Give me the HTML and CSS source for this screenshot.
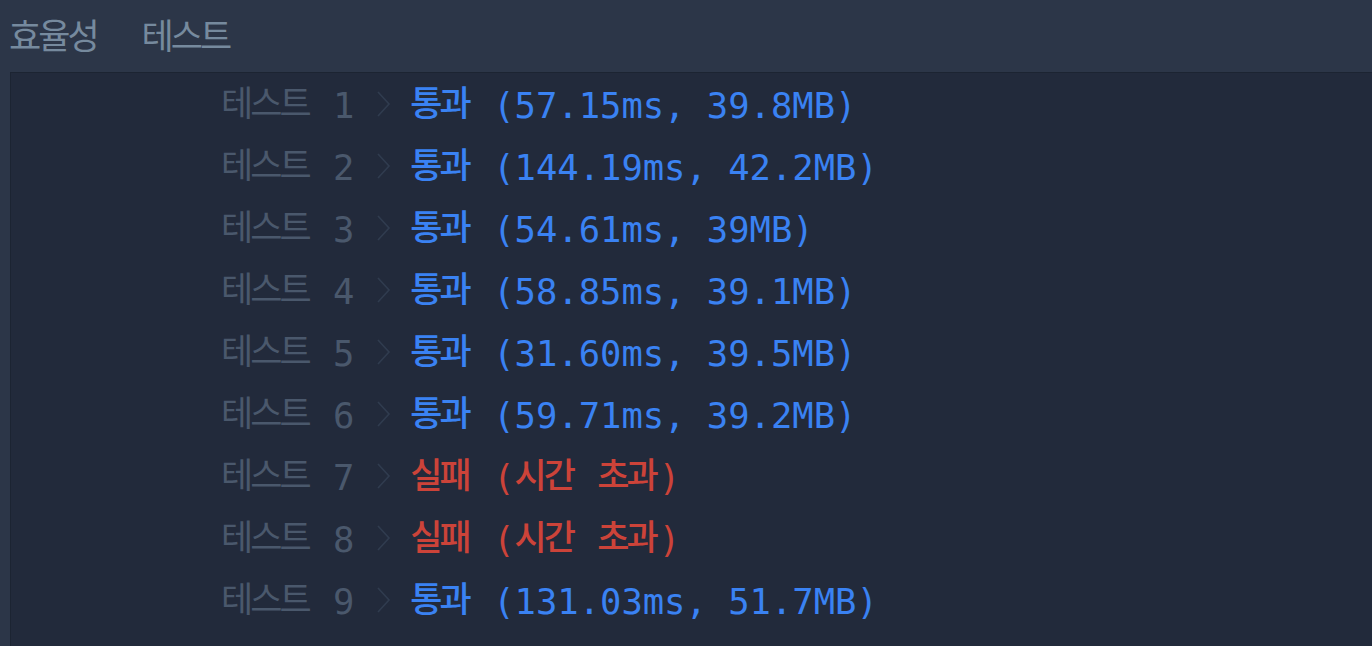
FILE: index.html
```html
<!DOCTYPE html>
<html lang="ko">
<head>
<meta charset="utf-8">
<link rel="stylesheet" href="styles.css">
</head>
<body>
<div class="header"><span class="ko">효율성</span><span class="ko">테스트</span></div>
<div class="panel">
  <div class="row"><span class="label"><span class="ko">테스트</span> 1</span><svg class="chev" viewBox="0 0 14 26" width="14" height="26"><polyline points="1,1 12,13 1,25"/></svg><span class="res pass"><span class="ko">통과</span> (57.15ms, 39.8MB)</span></div>
  <div class="row"><span class="label"><span class="ko">테스트</span> 2</span><svg class="chev" viewBox="0 0 14 26" width="14" height="26"><polyline points="1,1 12,13 1,25"/></svg><span class="res pass"><span class="ko">통과</span> (144.19ms, 42.2MB)</span></div>
  <div class="row"><span class="label"><span class="ko">테스트</span> 3</span><svg class="chev" viewBox="0 0 14 26" width="14" height="26"><polyline points="1,1 12,13 1,25"/></svg><span class="res pass"><span class="ko">통과</span> (54.61ms, 39MB)</span></div>
  <div class="row"><span class="label"><span class="ko">테스트</span> 4</span><svg class="chev" viewBox="0 0 14 26" width="14" height="26"><polyline points="1,1 12,13 1,25"/></svg><span class="res pass"><span class="ko">통과</span> (58.85ms, 39.1MB)</span></div>
  <div class="row"><span class="label"><span class="ko">테스트</span> 5</span><svg class="chev" viewBox="0 0 14 26" width="14" height="26"><polyline points="1,1 12,13 1,25"/></svg><span class="res pass"><span class="ko">통과</span> (31.60ms, 39.5MB)</span></div>
  <div class="row"><span class="label"><span class="ko">테스트</span> 6</span><svg class="chev" viewBox="0 0 14 26" width="14" height="26"><polyline points="1,1 12,13 1,25"/></svg><span class="res pass"><span class="ko">통과</span> (59.71ms, 39.2MB)</span></div>
  <div class="row"><span class="label"><span class="ko">테스트</span> 7</span><svg class="chev" viewBox="0 0 14 26" width="14" height="26"><polyline points="1,1 12,13 1,25"/></svg><span class="res fail"><span class="ko">실패</span> (<span class="ko">시간</span> <span class="ko">초과</span>)</span></div>
  <div class="row"><span class="label"><span class="ko">테스트</span> 8</span><svg class="chev" viewBox="0 0 14 26" width="14" height="26"><polyline points="1,1 12,13 1,25"/></svg><span class="res fail"><span class="ko">실패</span> (<span class="ko">시간</span> <span class="ko">초과</span>)</span></div>
  <div class="row"><span class="label"><span class="ko">테스트</span> 9</span><svg class="chev" viewBox="0 0 14 26" width="14" height="26"><polyline points="1,1 12,13 1,25"/></svg><span class="res pass"><span class="ko">통과</span> (131.03ms, 51.7MB)</span></div>
</div>
</body>
</html>
```
FILE: styles.css
```css
html, body {
  margin: 0;
  padding: 0;
  background: #2c3648;
  height: 100%;
  overflow: hidden;
}
body {
  font-family: "DejaVu Sans Mono", "Noto Sans CJK KR", monospace;
  font-size: 35.5px;
}
.ko {
  font-family: "Noto Sans CJK KR", sans-serif;
  font-size: 35px;
  font-weight: 500;
  letter-spacing: -3px;
  padding-right: 3px;
  vertical-align: 2px;
}
.header {
  height: 66px;
  padding-bottom: 6px;
  display: flex;
  align-items: center;
  gap: 42px;
  padding-left: 9px;
  color: #768a9e;
  line-height: 1;
}
.header .ko {
  font-weight: 400;
  vertical-align: 0;
}
.panel {
  margin-left: 10px;
  border-top: 1px solid #1c2432;
  border-left: 1px solid #1c2432;
  background: #222a3b;
  height: 600px;
}
.row {
  box-sizing: border-box;
  height: 62px;
  padding-bottom: 1px;
  display: flex;
  align-items: center;
  padding-left: 210px;
  line-height: 1;
  white-space: pre;
}
.label {
  color: #4a586c;
}
.label .ko {
  font-weight: 400;
}
.chev {
  margin-left: 23px;
  margin-right: 19px;
  fill: none;
  stroke: #303c4f;
  stroke-width: 1.6;
}
.pass {
  color: #3a82f3;
}
.fail {
  color: #cc4339;
}
```
